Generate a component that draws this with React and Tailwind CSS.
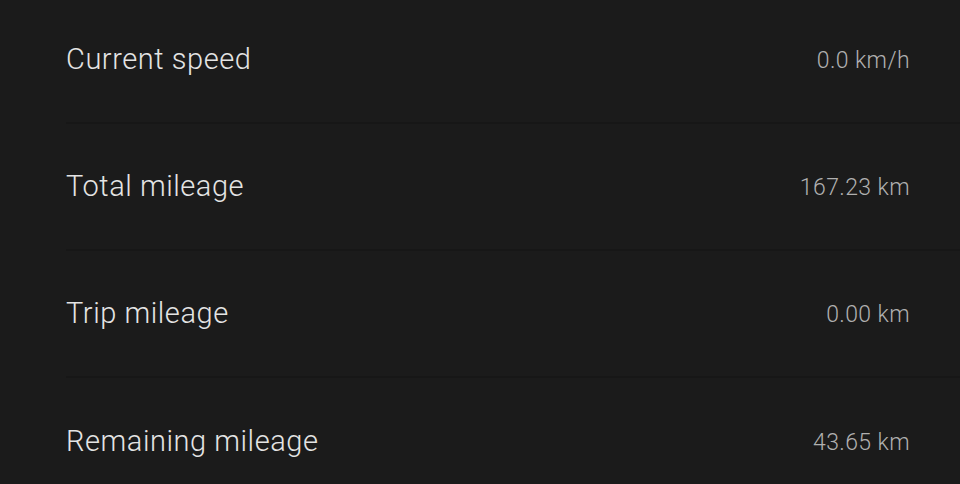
import React from 'react';

const rows = [
  { label: 'Current speed', value: '0.0 km/h' },
  { label: 'Total mileage', value: '167.23 km' },
  { label: 'Trip mileage', value: '0.00 km' },
  { label: 'Remaining mileage', value: '43.65 km' },
];

const App = () => {
  return (
    <div className="w-[960px] h-[484px] overflow-hidden bg-[#1b1b1b]" style={{ fontFamily: 'Roboto, "Liberation Sans", sans-serif' }}>
      <div className="-mt-[3px] pl-[66px]">
        {rows.map((row, i) => (
          <div
            key={row.label}
            className={`flex items-center justify-between h-[127px] pr-[50px] ${i < rows.length - 1 ? 'border-b-2 border-[#171717]' : ''}`}
          >
            <span className="text-[29px] font-light text-[#e4e4e4] tracking-[0.55px]">{row.label}</span>
            <span className="pt-[4px] text-[23px] font-light text-[#b0b0b0] tracking-[0.4px]">{row.value}</span>
          </div>
        ))}
      </div>
    </div>
  );
};

export default App;
